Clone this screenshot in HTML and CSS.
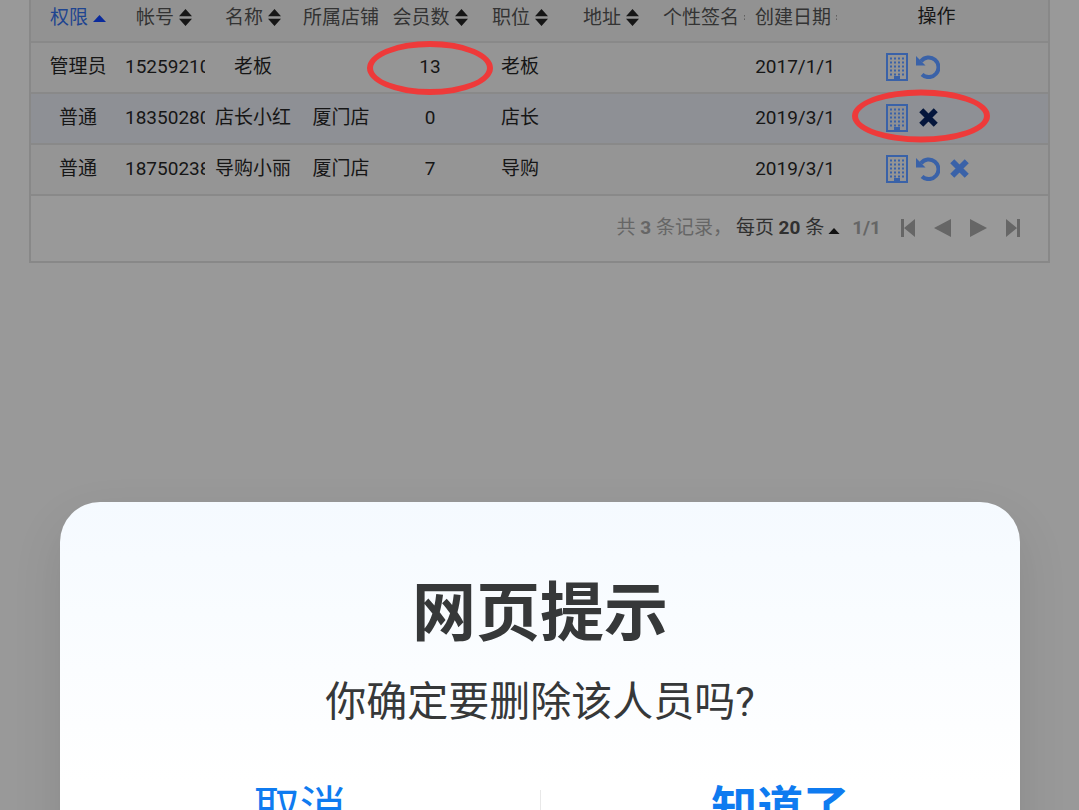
FILE: index.html
```html
<!DOCTYPE html>
<html lang="zh-CN">
  <head>
    <meta charset="UTF-8" />
    <meta name="viewport" content="width=device-width, initial-scale=1.0" />
    <title>人员管理</title>
    <link rel="stylesheet" href="styles.css">
  </head>
  <body>
    <!-- shared icons -->
    <svg class="sprite" width="0" height="0" aria-hidden="true">
      <symbol id="i-sort" viewBox="0 0 13 17">
        <path d="M6.5 0 13 7.2H0zM0 9.8h13L6.5 17z" />
      </symbol>
      <symbol id="i-up" viewBox="0 0 13 7">
        <path d="M6.5 0 13 7H0z" />
      </symbol>
      <symbol id="i-building" viewBox="0 0 22 28">
        <rect x="1" y="1" width="20" height="26" fill="none" stroke="currentColor" stroke-width="2" />
        <path d="M4 5.500h14M4 9.500h14M4 13.500h14M4 17.500h14M4 21.500h14" stroke="currentColor" stroke-width="2" stroke-dasharray="2 2" />
        <path d="M8 23h6v4H8z" />
      </symbol>
      <symbol id="i-undo" viewBox="0 0 24 24">
        <path d="M5 6.200A9.800 9.800 0 1 1 6 19.500" fill="none" stroke="currentColor" stroke-width="4" />
        <path d="M0 1v9.500h9.500z" />
      </symbol>
      <symbol id="i-close" viewBox="0 0 20 20">
        <path d="M4.500 4.500l11 11M15.500 4.500l-11 11" stroke="currentColor" stroke-width="6" stroke-linecap="square" stroke-linejoin="round" />
      </symbol>
    </svg>

    <main class="grid">
      <table class="staff">
        <colgroup>
          <col class="c-role">
          <col class="c-account">
          <col class="c-name">
          <col class="c-shop">
          <col class="c-members">
          <col class="c-job">
          <col class="c-address">
          <col class="c-sign">
          <col class="c-date">
          <col>
        </colgroup>
        <thead>
          <tr>
            <th class="role sorted">权限<svg class="sort up"><use href="#i-up" /></svg></th>
            <th>帐号<svg class="sort"><use href="#i-sort" /></svg></th>
            <th>名称<svg class="sort"><use href="#i-sort" /></svg></th>
            <th>所属店铺</th>
            <th>会员数<svg class="sort"><use href="#i-sort" /></svg></th>
            <th>职位<svg class="sort"><use href="#i-sort" /></svg></th>
            <th>地址<svg class="sort"><use href="#i-sort" /></svg></th>
            <th><div class="clip">个性签名<svg class="sort"><use href="#i-sort" /></svg></div></th>
            <th><div class="clip">创建日期<svg class="sort"><use href="#i-sort" /></svg></div></th>
            <th class="ops-head">操作</th>
          </tr>
        </thead>
        <tbody>
          <tr>
            <td class="role">管理员</td>
            <td><div class="clip">15259210</div></td>
            <td>老板</td>
            <td></td>
            <td class="marked">13<span class="ring ring-count"></span></td>
            <td>老板</td>
            <td></td>
            <td></td>
            <td>2017/1/1</td>
            <td class="marked">
              <div class="ops">
                <button type="button" aria-label="店铺"><svg class="building"><use href="#i-building" /></svg></button>
                <button type="button" aria-label="恢复"><svg class="undo"><use href="#i-undo" /></svg></button>
              </div>
            </td>
          </tr>
          <tr class="active">
            <td class="role">普通</td>
            <td><div class="clip">18350280</div></td>
            <td>店长小红</td>
            <td>厦门店</td>
            <td>0</td>
            <td>店长</td>
            <td></td>
            <td></td>
            <td>2019/3/1</td>
            <td class="marked">
              <div class="ops">
                <button type="button" aria-label="店铺"><svg class="building"><use href="#i-building" /></svg></button>
                <button type="button" aria-label="删除" class="pressed"><svg class="close"><use href="#i-close" /></svg></button>
              </div>
              <span class="ring ring-ops"></span>
            </td>
          </tr>
          <tr>
            <td class="role">普通</td>
            <td><div class="clip">18750238</div></td>
            <td>导购小丽</td>
            <td>厦门店</td>
            <td>7</td>
            <td>导购</td>
            <td></td>
            <td></td>
            <td>2019/3/1</td>
            <td class="marked">
              <div class="ops">
                <button type="button" aria-label="店铺"><svg class="building"><use href="#i-building" /></svg></button>
                <button type="button" aria-label="恢复"><svg class="undo"><use href="#i-undo" /></svg></button>
                <button type="button" aria-label="删除"><svg class="close"><use href="#i-close" /></svg></button>
              </div>
            </td>
          </tr>
        </tbody>
      </table>

      <div class="pager">
        <span class="total">共 <b>3</b> 条记录，</span>
        <button type="button" class="page-size">每页 <b>20</b> 条<svg class="caret"><use href="#i-up" /></svg></button>
        <b class="page-no">1/1</b>
        <div class="page-nav">
          <button type="button" aria-label="首页"><svg width="14" height="18" viewBox="0 0 14 18"><path d="M0 0h3v18H0zM14 0v18L3 9z" /></svg></button>
          <button type="button" aria-label="上一页"><svg width="17" height="18" viewBox="0 0 17 18"><path d="M17 0v18L0 9z" /></svg></button>
          <button type="button" aria-label="下一页"><svg width="17" height="18" viewBox="0 0 17 18"><path d="M0 0v18l17-9z" /></svg></button>
          <button type="button" aria-label="末页"><svg width="14" height="18" viewBox="0 0 14 18"><path d="M11 0h3v18h-3zM0 0v18l11-9z" /></svg></button>
        </div>
      </div>
    </main>

    <section class="dialog" role="alertdialog" aria-labelledby="dialog-title" aria-describedby="dialog-text">
      <h1 id="dialog-title">网页提示</h1>
      <p id="dialog-text">你确定要删除该人员吗?</p>
      <div class="dialog-buttons">
        <button type="button">取消</button>
        <button type="button" class="confirm">知道了</button>
      </div>
    </section>
  </body>
</html>
```
FILE: styles.css
```css
* {
  box-sizing: border-box;
}

body {
  margin: 0;
  height: 100vh;
  overflow: hidden;
  background-color: #999;
  color: #161616;
  font-family: Roboto, "Noto Sans CJK SC", sans-serif;
  font-size: 19px;
  line-height: 28px;
}

button {
  padding: 0;
  border: none;
  background: none;
  color: inherit;
  font: inherit;
  cursor: pointer;
}

svg {
  fill: currentColor;
}

.sprite {
  position: absolute;
}

/* staff table */
.grid {
  margin: 0 29px;
  border: 2px solid #888;
  border-top: none;
}

.staff {
  width: 100%;
  table-layout: fixed;
  border-collapse: separate;
  border-spacing: 0;
  background-color: #959595;
}

.c-role {
  width: 88px;
}

.c-account,
.c-members,
.c-job {
  width: 90px;
}

.c-name,
.c-shop {
  width: 88px;
}

.c-address,
.c-sign,
.c-date {
  width: 92px;
}

th,
td {
  padding: 0 2px;
  border-bottom: 2px solid #898989;
  font-weight: normal;
  text-align: center;
  white-space: nowrap;
}

th {
  height: 43px;
  padding-bottom: 5px;
  background-color: #929292;
  color: #333;
}

td {
  height: 51px;
  padding-bottom: 2px;
}

.active td {
  background-color: #8e9095;
}

.role {
  padding-left: 8px;
}

.sorted {
  color: #1f4590;
}

.clip {
  margin: 0 2px 0 4px;
  overflow: hidden;
  text-align: left;
}

.ops-head {
  padding: 0 16px 8px 0;
  color: #161616;
}

.sort {
  width: 13px;
  height: 17px;
  margin-left: 5px;
  vertical-align: -2px;
  color: #161616;
}

.sort.up {
  height: 7px;
  vertical-align: 2px;
  color: #0a2a9c;
}

.ops {
  display: flex;
  align-items: center;
  gap: 7px;
  padding-left: 42px;
  color: #3a62a8;
}

.ops button {
  display: flex;
  justify-content: center;
  min-width: 24px;
}

.ops .pressed {
  color: #04163c;
}

.building {
  width: 22px;
  height: 28px;
}

.undo {
  width: 24px;
  height: 24px;
}

.close {
  width: 19px;
  height: 19px;
}

/* red pen marks over the cells */
.marked {
  position: relative;
}

.ring {
  position: absolute;
  top: 50%;
  left: 50%;
  border: 6px solid #ee3a3a;
  border-radius: 50%;
  transform: translate(-50%, -50%);
  pointer-events: none;
}

.ring-count {
  width: 126px;
  height: 54px;
}

.ring-ops {
  top: 22px;
  left: 80px;
  width: 138px;
  height: 53px;
}

/* pager */
.pager {
  display: flex;
  justify-content: flex-end;
  align-items: center;
  height: 65px;
  padding: 0 28px 2px 0;
  color: #666;
}

.page-size {
  margin-left: 4px;
  color: #303030;
}

.caret {
  width: 12px;
  height: 6px;
  margin-left: 4px;
  color: #111;
}

.page-no {
  margin: 0 20px 0 12px;
}

.page-nav {
  display: flex;
  gap: 19px;
}

.page-nav button {
  display: flex;
}

/* confirm dialog */
.dialog {
  margin: 239px 59px 0 60px;
  padding-top: 64px;
  border-radius: 40px;
  background: linear-gradient(#f5faff, #fff 280px);
  box-shadow: 0 20px 50px rgba(0, 0, 0, 0.1);
  color: #363839;
  text-align: center;
}

.dialog h1 {
  margin: 0;
  font-size: 64px;
  font-weight: 700;
  line-height: 96px;
}

.dialog p {
  margin: 10px 0 58px;
  font-size: 41px;
  line-height: 60px;
}

.dialog-buttons {
  display: flex;
}

.dialog-buttons button {
  flex: 1;
  height: 80px;
  padding-bottom: 44px;
  color: #0f7bf0;
  font-size: 46px;
  line-height: 36px;
}

.dialog-buttons .confirm {
  border-left: 1px solid #e8e8e8;
  font-weight: 700;
}
```
